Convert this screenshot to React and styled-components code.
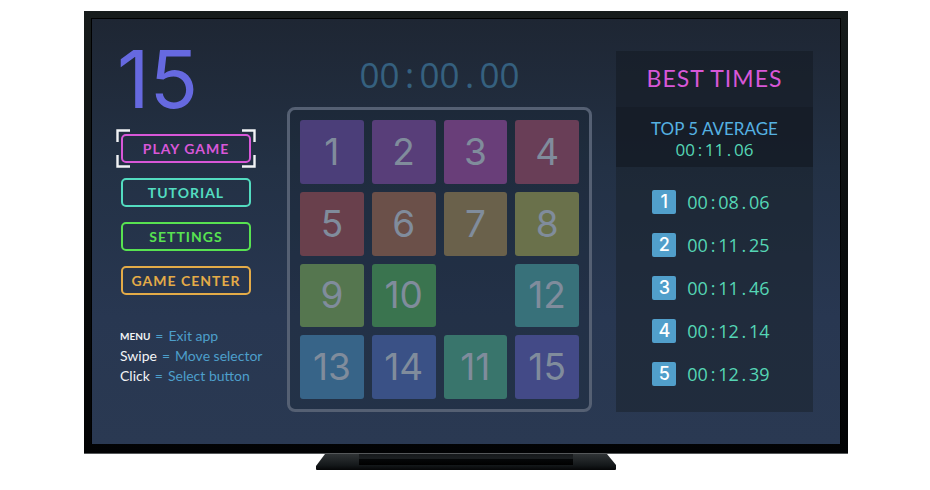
import React from "react";
import styled, { createGlobalStyle, css } from "styled-components";

const theme = {
  fonts: {
    text: '"Lato", "Open Sans", sans-serif',
    digits: '"Open Sans", "Noto Sans", sans-serif',
    display: '"Inter", "Open Sans", sans-serif'
  },
  colors: {
    indigo: "#6669e0",
    pink: "#d857d8",
    teal: "#53dcc0",
    green: "#58e251",
    orange: "#e3ab48",
    sky: "#55b1e2",
    blue: "#4d9fcb",
    mint: "#55d6b5",
    timer: "#35607f",
    digit: "#808c9c",
    frame: "#556073"
  }
};

const GlobalStyle = createGlobalStyle`
  * {
    box-sizing: border-box;
  }

  body {
    margin: 0;
    background: #fff;
    font-family: ${theme.fonts.text};
  }
`;

const Page = styled.main`
  padding: 11px 82px 0 84px;
`;

const Bezel = styled.div`
  padding: 7px 7px 9px;
  background: linear-gradient(#171c1c, #0a0d0e 50%, #020304);
  border-bottom: 1px solid #55585a;
`;

const Screen = styled.div`
  display: grid;
  grid-template-columns: minmax(0, 143fr) minmax(0, 305fr) minmax(0, 197fr);
  column-gap: 24px;
  padding: 32px 27px 32px 28px;
  border: 1px solid #000;
  border-bottom: 0;
  background: linear-gradient(#1e2633, #233145 35%, #283751 70%, #2a3952);
`;

const Stand = styled.svg`
  display: block;
  width: 302px;
  height: 16px;
  margin: 0 auto;
`;

const Menu = styled.nav`
  display: flex;
  flex-direction: column;
  align-items: flex-start;
  white-space: nowrap;
`;

const Title = styled.h1`
  margin: 0 0 27px -3px;
  font: 400 80px/56px ${theme.fonts.display};
  color: ${theme.colors.indigo};
`;

const ButtonList = styled.div`
  display: flex;
  flex-direction: column;
  gap: 15px;
  margin: 0 0 31px 1px;
`;

const MenuButton = styled.button`
  position: relative;
  width: 130px;
  height: 29px;
  padding: 0;
  border: 2px solid ${props => props.$color};
  border-radius: 5px;
  background: none;
  color: ${props => props.$color};
  font: 700 14px/25px ${theme.fonts.text};
  letter-spacing: 1px;
  text-transform: uppercase;
`;

const Selector = styled.svg`
  position: absolute;
  top: -7px;
  left: -7px;
  width: 140px;
  height: 39px;
  fill: none;
  stroke: #f1f3f5;
  stroke-width: 2.4;
`;

const Help = styled.dl`
  margin: 0;
  font-size: 14px;
  line-height: 20px;
  color: ${theme.colors.blue};
`;

const HelpRow = styled.div`
  display: flex;
  gap: 5px;
`;

const Key = styled.dt`
  color: #f2f4f6;
  ${props =>
    props.$small &&
    css`
      font-size: 10px;
      font-weight: 700;
    `}
`;

const Action = styled.dd`
  display: flex;
  gap: 5px;
  margin: 0;
`;

const Game = styled.section`
  display: flex;
  flex-direction: column;
`;

const Timer = styled.div`
  height: 56px;
  font: 400 35px/48px ${theme.fonts.digits};
  color: ${theme.colors.timer};
  text-align: center;
`;

const Separator = styled.span`
  display: inline-block;
  width: 1ch;
  text-align: center;
`;

const Board = styled.div`
  display: grid;
  grid-template-columns: repeat(4, minmax(0, 1fr));
  gap: 8px;
  padding: 10px;
  border: 3px solid ${theme.colors.frame};
  border-radius: 8px;
  background: rgba(20, 32, 44, 0.25);
`;

const Tile = styled.div`
  display: flex;
  align-items: center;
  justify-content: center;
  aspect-ratio: 1;
  border-radius: 3px;
  background: ${props => props.$color};
  color: ${theme.colors.digit};
  font: 400 37px/40px ${theme.fonts.display};
`;

const Scores = styled.aside`
  background: rgba(24, 32, 40, 0.5);
  text-align: center;
  white-space: nowrap;
`;

const ScoresTitle = styled.h2`
  margin: 0;
  background: rgba(20, 26, 36, 0.35);
  color: ${theme.colors.pink};
  font-size: 23px;
  font-weight: 400;
  line-height: 55px;
  padding-bottom: 1px;
  letter-spacing: 1px;
`;

const Average = styled.div`
  height: 60px;
  padding-top: 12px;
  background: rgba(18, 24, 34, 0.6);
`;

const AverageLabel = styled.div`
  color: ${theme.colors.sky};
  font-size: 17px;
  line-height: 20px;
`;

const Time = styled.div`
  color: ${theme.colors.mint};
  font: 400 18px/24px ${theme.fonts.digits};
`;

const AverageTime = styled(Time)`
  font-size: 17px;
  line-height: 22px;
`;

const TimeList = styled.ol`
  display: flex;
  flex-direction: column;
  gap: 19px;
  width: max-content;
  margin: 0 auto;
  padding: 23px 7px 0 0;
  list-style: none;
`;

const TimeRow = styled.li`
  display: flex;
  gap: 11px;
`;

const Rank = styled.span`
  width: 24px;
  height: 24px;
  border-radius: 2px;
  background: #519fcb;
  color: #fff;
  font: 500 18px/24px ${theme.fonts.display};
`;

const buttons = [
  { label: "Play Game", color: theme.colors.pink, focused: true },
  { label: "Tutorial", color: theme.colors.teal },
  { label: "Settings", color: theme.colors.green },
  { label: "Game Center", color: theme.colors.orange }
];

const help = [
  { key: "MENU", action: "Exit app", small: true },
  { key: "Swipe", action: "Move selector" },
  { key: "Click", action: "Select button" }
];

const tiles = [
  { number: 1, color: "#4b3e79" },
  { number: 2, color: "#583e79" },
  { number: 3, color: "#693e79" },
  { number: 4, color: "#693e57" },
  { number: 5, color: "#69404c" },
  { number: 6, color: "#6b5049" },
  { number: 7, color: "#6a614b" },
  { number: 8, color: "#6a714b" },
  { number: 9, color: "#55764f" },
  { number: 10, color: "#3a744f" },
  { color: "transparent" },
  { number: 12, color: "#38717a" },
  { number: 13, color: "#376488" },
  { number: 14, color: "#3a5186" },
  { number: 11, color: "#39756c" },
  { number: 15, color: "#434a87" }
];

const bestTimes = ["00:08.06", "00:11.25", "00:11.46", "00:12.14", "00:12.39"];

// separators take the width of a digit so the times line up
const Clock = ({ value }) =>
  value
    .split(/([:.])/)
    .map((part, i) =>
      i % 2 ? <Separator key={i}>{part}</Separator> : part
    );

const App = () => (
  <Page>
    <GlobalStyle />
    <Bezel>
      <Screen>
        <Menu>
          <Title>15</Title>
          <ButtonList>
            {buttons.map(button => (
              <MenuButton key={button.label} $color={button.color}>
                {button.label}
                {button.focused && (
                  <Selector viewBox="0 0 140 39" aria-hidden="true">
                    <path d="M1.5 13V1.5H14M126 1.5H138.5V13M138.5 26V37.5H126M14 37.5H1.5V26" />
                  </Selector>
                )}
              </MenuButton>
            ))}
          </ButtonList>
          <Help>
            {help.map(item => (
              <HelpRow key={item.key}>
                <Key $small={item.small}>{item.key}</Key>
                <Action>
                  <span>=</span>
                  <span>{item.action}</span>
                </Action>
              </HelpRow>
            ))}
          </Help>
        </Menu>

        <Game>
          <Timer>
            <Clock value="00:00.00" />
          </Timer>
          <Board>
            {tiles.map((tile, i) => (
              <Tile key={i} $color={tile.color}>
                {tile.number}
              </Tile>
            ))}
          </Board>
        </Game>

        <Scores>
          <ScoresTitle>BEST TIMES</ScoresTitle>
          <Average>
            <AverageLabel>TOP 5 AVERAGE</AverageLabel>
            <AverageTime>
              <Clock value="00:11.06" />
            </AverageTime>
          </Average>
          <TimeList>
            {bestTimes.map((time, i) => (
              <TimeRow key={time}>
                <Rank>{i + 1}</Rank>
                <Time>
                  <Clock value={time} />
                </Time>
              </TimeRow>
            ))}
          </TimeList>
        </Scores>
      </Screen>
    </Bezel>
    <Stand viewBox="0 0 302 16" aria-hidden="true">
      <defs>
        <linearGradient id="foot" x1="0" y1="0" x2="0" y2="1">
          <stop offset="0" stopColor="#303436" />
          <stop offset="0.7" stopColor="#14181a" />
          <stop offset="1" stopColor="#050607" />
        </linearGradient>
        <linearGradient id="neck" x1="0" y1="0" x2="0" y2="1">
          <stop offset="0" stopColor="#16191b" />
          <stop offset="0.4" stopColor="#1c2022" />
          <stop offset="0.5" stopColor="#050708" />
          <stop offset="1" stopColor="#000" />
        </linearGradient>
      </defs>
      <path d="M10 0H292L301 11V15Q301 16 300 16H2Q1 16 1 15V12Z" fill="url(#foot)" />
      <path d="M44 0H258V11H44Z" fill="url(#neck)" />
    </Stand>
  </Page>
);

export default App;
